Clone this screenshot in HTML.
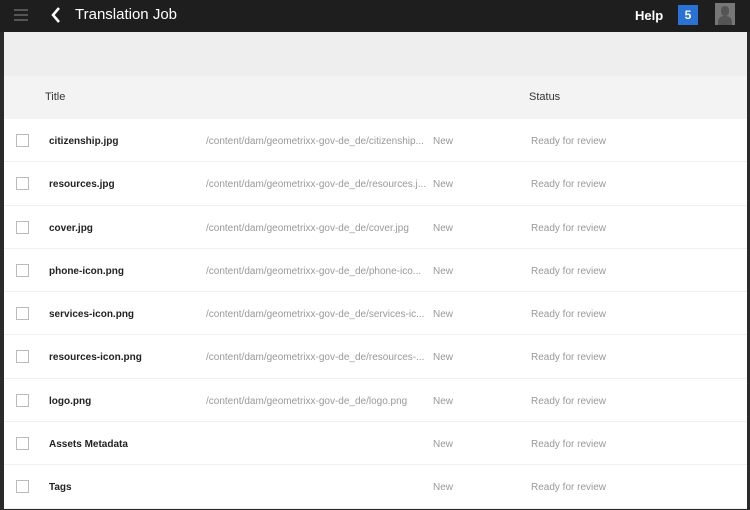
<!DOCTYPE html>
<html><head><style>
*{margin:0;padding:0;box-sizing:border-box}
body{width:750px;height:508px;overflow:hidden;background:#2a2a2a;font-family:"Liberation Sans",sans-serif;position:relative}
.top{position:absolute;left:0;top:0;width:750px;height:32px;background:#1e1e1e;color:#fff}
.main{position:absolute;left:4px;top:32px;width:743px;height:476px;background:#fff}
.bar{height:44px;background:#eeeeee}
.hdr{height:43px;background:#f3f3f3;position:relative;font-size:11px;color:#333;line-height:43px}
.row{height:43.3px;border-bottom:1px solid #efefef;position:relative;font-size:10px;line-height:45px}
.row span,.hdr span{position:absolute;top:0;white-space:nowrap}
.cb{position:absolute;left:12px;top:15px;width:13px;height:13px;border:1px solid #bbb;background:#fff}
.t{left:45px;font-weight:bold;color:#222}
.p{left:202px;color:#999}
.n{left:429px;color:#999}
.s{left:527px;color:#999}
</style></head><body>
<div class="top">
<div style="position:absolute;left:14px;top:9px;width:14px;height:2px;background:#555;box-shadow:0 5px 0 #555,0 10px 0 #555"></div>
<svg style="position:absolute;left:50px;top:6px" width="12" height="18"><path d="M9 2L3 9l6 7" stroke="#fff" stroke-width="2.5" fill="none"/></svg>
<div style="position:absolute;left:75px;top:6px;font-size:15px">Translation Job</div>
<div style="position:absolute;left:635px;top:8px;font-size:13px;font-weight:bold">Help</div>
<div style="position:absolute;left:678px;top:5px;width:20px;height:20px;background:#2b72d6;font-size:12px;font-weight:bold;text-align:center;line-height:20px">5</div>
<div style="position:absolute;left:715px;top:3px;width:20px;height:22px;background:#777"><div style="position:absolute;left:6px;top:3px;width:8px;height:10px;border-radius:4px;background:#555"></div><div style="position:absolute;left:3px;top:13px;width:14px;height:9px;border-radius:6px 6px 0 0;background:#555"></div></div>
</div>
<div class="main">
<div class="bar"></div>
<div class="hdr"><span style="left:41px">Title</span><span style="left:525px">Status</span></div>
<div class="row"><div class="cb"></div><span class="t">citizenship.jpg</span><span class="p">/content/dam/geometrixx-gov-de_de/citizenship...</span><span class="n">New</span><span class="s">Ready for review</span></div>
<div class="row"><div class="cb"></div><span class="t">resources.jpg</span><span class="p">/content/dam/geometrixx-gov-de_de/resources.j...</span><span class="n">New</span><span class="s">Ready for review</span></div>
<div class="row"><div class="cb"></div><span class="t">cover.jpg</span><span class="p">/content/dam/geometrixx-gov-de_de/cover.jpg</span><span class="n">New</span><span class="s">Ready for review</span></div>
<div class="row"><div class="cb"></div><span class="t">phone-icon.png</span><span class="p">/content/dam/geometrixx-gov-de_de/phone-ico...</span><span class="n">New</span><span class="s">Ready for review</span></div>
<div class="row"><div class="cb"></div><span class="t">services-icon.png</span><span class="p">/content/dam/geometrixx-gov-de_de/services-ic...</span><span class="n">New</span><span class="s">Ready for review</span></div>
<div class="row"><div class="cb"></div><span class="t">resources-icon.png</span><span class="p">/content/dam/geometrixx-gov-de_de/resources-...</span><span class="n">New</span><span class="s">Ready for review</span></div>
<div class="row"><div class="cb"></div><span class="t">logo.png</span><span class="p">/content/dam/geometrixx-gov-de_de/logo.png</span><span class="n">New</span><span class="s">Ready for review</span></div>
<div class="row"><div class="cb"></div><span class="t">Assets Metadata</span><span class="n">New</span><span class="s">Ready for review</span></div>
<div class="row"><div class="cb"></div><span class="t">Tags</span><span class="n">New</span><span class="s">Ready for review</span></div>
</div>
</body></html>
